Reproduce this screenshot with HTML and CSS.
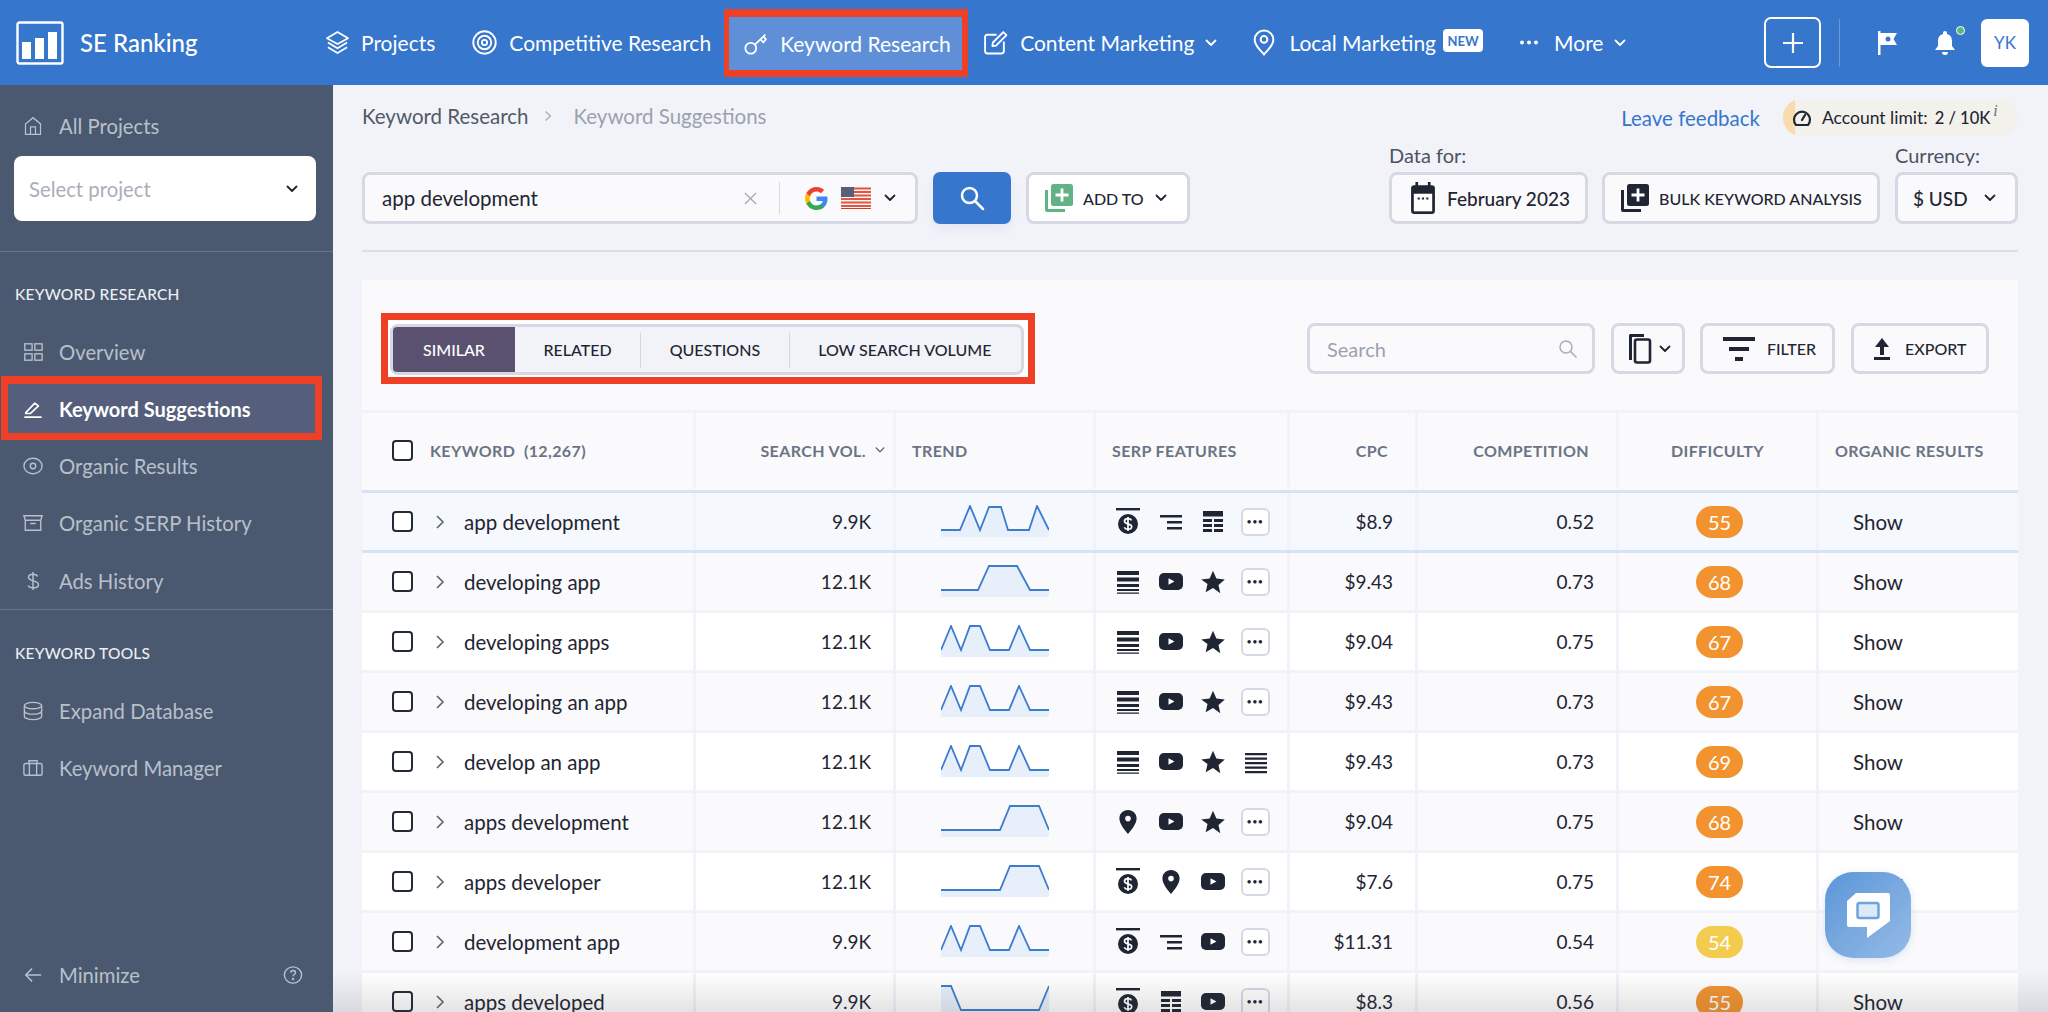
FILE: index.html
```html
<!DOCTYPE html>
<html lang="en">
<head>
<meta charset="utf-8">
<title>SE Ranking - Keyword Suggestions</title>
<link rel="stylesheet" href="styles.css">
</head>
<body>
<svg class="defs" width="0" height="0" aria-hidden="true">
  <symbol id="chev" viewBox="0 0 12 8"><path d="M1.500 1.500 6 6l4.500-4.500" fill="none" stroke="currentColor" stroke-width="1.800" stroke-linecap="round" stroke-linejoin="round"/></symbol>
  <symbol id="ad" viewBox="0 0 24 28"><rect x="0" y="0" width="24" height="2.400" fill="#1f2532"/><circle cx="12" cy="16" r="10" fill="#1f2532"/><path d="M15.600 12.400c-.7-1.100-2-1.700-3.600-1.700-2 0-3.500 1-3.500 2.600 0 3.600 7.200 1.800 7.200 5.300 0 1.700-1.600 2.700-3.700 2.700-1.700 0-3-.7-3.800-1.900M12 9v14" fill="none" stroke="#fff" stroke-width="1.700"/></symbol>
  <symbol id="rlines" viewBox="0 0 24 24"><path d="M1 5h22v2.600H1zM8 11h15v2.600H8zM8 17h15v2.600H8z" fill="#1f2532"/></symbol>
  <symbol id="tbl" viewBox="0 0 24 24"><path d="M2 1h20v5.500H2zM2 9h9v3H2zM13 9h9v3H13zM2 14h9v3H2zM13 14h9v3H13zM2 19h9v3H2zM13 19h9v3H13z" fill="#1f2532"/></symbol>
  <symbol id="stack" viewBox="0 0 24 24"><path d="M1 1h22v4H1zM1 7.500h22v4H1zM1 14h22v3H1zM1 19h22v2H1zM1 22.500h22v1.200H1z" fill="#1f2532"/></symbol>
  <symbol id="hlines" viewBox="0 0 24 24"><path d="M1 3h22v2.200H1zM1 7.500h22v2.200H1zM1 12h22v2.200H1zM1 16.500h22v2.200H1zM1 21h22v2.200H1z" fill="#1f2532"/></symbol>
  <symbol id="yt" viewBox="0 0 24 17"><rect width="24" height="17" rx="5" fill="#1f2532"/><path d="M9.500 5.200v6.600L15.500 8.500z" fill="#fff"/></symbol>
  <symbol id="star" viewBox="0 0 24 24"><path d="m12 .8 3.400 7.800 8.400.8-6.300 5.600 1.800 8.300L12 18.100l-7.300 4.200 1.800-8.300L.2 9.400l8.400-.8z" fill="#1f2532"/></symbol>
  <symbol id="pin" viewBox="0 0 18 24"><path fill-rule="evenodd" d="M9 0C4 0 .4 3.700.4 8.400.4 14 6 20 9 24c3-4 8.600-10 8.600-15.600C17.600 3.700 14 0 9 0zm0 5.800a2.800 2.800 0 1 1 0 5.600 2.800 2.800 0 0 1 0-5.600z" fill="#1f2532"/></symbol>
  <symbol id="tw" viewBox="0 0 108 33"><path d="M0 32V25L10 0 20 25 29 0h10l10 25h19L78 0 89 25h19v7z" fill="#e7f0fa"/><path d="M0 25 10 1 20 25 29 1h10l10 24h19L78 1 89 25h19" fill="none" stroke="#3c7ccf" stroke-width="1.800"/></symbol>
  <symbol id="tw1" viewBox="0 0 108 33"><path d="M0 32v-7h19L29 0l10 25L48 1h12l7 24h21L96 0l12 25v7z" fill="#e7f0fa"/><path d="M0 25h19L29 1l10 24L48 2h12l7 23h21L96 1l12 24" fill="none" stroke="#3c7ccf" stroke-width="1.800"/></symbol>
  <symbol id="tw2" viewBox="0 0 108 33"><path d="M0 32v-7h37L48 1h28l13 24h19v7z" fill="#e7f0fa"/><path d="M0 25h37L48 1h28l13 24h19" fill="none" stroke="#3c7ccf" stroke-width="1.800"/></symbol>
  <symbol id="tw3" viewBox="0 0 108 33"><path d="M0 32v-7h59L69 1h29l10 24v7z" fill="#e7f0fa"/><path d="M0 25h59L69 1h29l10 24" fill="none" stroke="#3c7ccf" stroke-width="1.800"/></symbol>
  <symbol id="tw4" viewBox="0 0 108 33"><path d="M0 33V1h10l10 24h78l10-24v32z" fill="#e7f0fa"/><path d="M0 1h10l10 24h78l10-24" fill="none" stroke="#3c7ccf" stroke-width="1.800"/></symbol>
</svg>

<header class="topbar">
  <a class="brand">
    <svg class="logo" viewBox="0 0 48 44"><rect x="1.500" y="1.500" width="45" height="41" rx="2" fill="none" stroke="#fff" stroke-width="2.400"/><path d="M6 21h9v17H6zM19 17h9v21h-9zM32 11h9v27h-9z" fill="#fff"/></svg>
    <span>SE Ranking</span>
  </a>
  <nav class="mainnav">
    <a class="navlink n-projects">
      <svg class="navicon" viewBox="0 0 26 26" fill="none" stroke="#fff" stroke-width="1.800" stroke-linejoin="round"><path d="M13 2 2 8.500l11 6 11-6z"/><path d="m3 13 10 6 10-6M3 18l10 6 10-6"/></svg>
      Projects</a>
    <a class="navlink n-comp">
      <svg class="navicon" viewBox="0 0 24 24" fill="none" stroke="#fff" stroke-width="1.800"><circle cx="12" cy="12" r="10.800"/><circle cx="12" cy="12" r="6.500"/><circle cx="12" cy="12" r="2.500"/></svg>
      Competitive Research</a>
    <a class="navlink active">
      <svg class="navicon" viewBox="0 0 24 24" fill="none" stroke="#fff" stroke-width="1.700"><circle cx="6.500" cy="16.500" r="5.200"/><path d="m10.500 13 10-9.500M16 8l2.500 3 2.500-3-2-2.500"/></svg>
      Keyword Research</a>
    <a class="navlink n-content">
      <svg class="navicon" viewBox="0 0 24 24" fill="none" stroke="#fff" stroke-width="1.800" stroke-linejoin="round"><path d="M20 11v9.500a2 2 0 0 1-2 2H4a2 2 0 0 1-2-2V6.500a2 2 0 0 1 2-2h9"/><path d="M9.500 12 19.500 2l3 3-10 10-3.500.5z"/></svg>
      Content Marketing
      <svg class="chev" viewBox="0 0 12 8"><use href="#chev"/></svg></a>
    <a class="navlink n-local">
      <svg class="navicon" viewBox="0 0 22 26" fill="none" stroke="#fff" stroke-width="1.900"><path d="M11 1.500c-5 0-9 3.800-9 8.800 0 5.700 6 10.700 9 14.200 3-3.500 9-8.500 9-14.200 0-5-4-8.800-9-8.800z"/><circle cx="11" cy="10" r="3.200"/></svg>
      Local Marketing <span class="new">NEW</span></a>
    <a class="navlink n-more">
      <svg class="dots" viewBox="0 0 18 4"><circle cx="2" cy="2" r="2" fill="#fff"/><circle cx="9" cy="2" r="2" fill="#fff"/><circle cx="16" cy="2" r="2" fill="#fff"/></svg>
      More
      <svg class="chev" viewBox="0 0 12 8"><use href="#chev"/></svg></a>
  </nav>
  <div class="topright">
    <button class="plus"><svg viewBox="0 0 24 24" width="24" height="24"><path d="M12 2v20M2 12h20" stroke="#fff" stroke-width="2.200"/></svg></button>
    <span class="vsep"></span>
    <svg class="flag" viewBox="0 0 22 24"><path fill-rule="evenodd" d="M1 0h2.500v2H20l-3.500 6 3.500 6H3.500v10H1zM11 5.500a2.500 2.500 0 1 0 0 5 2.500 2.500 0 0 0 0-5z" fill="#fff"/></svg>
    <span class="bell">
      <svg viewBox="0 0 22 24" width="22" height="24"><path d="M11 0a2 2 0 0 1 2 2v1c3.500.8 5 3.700 5 7v5l3 4H1l3-4v-5c0-3.300 1.500-6.200 5-7V2a2 2 0 0 1 2-2zM8 21h6a3 3 0 0 1-6 0z" fill="#fff"/></svg>
      <i class="dot"></i>
    </span>
    <span class="avatar">YK</span>
  </div>
</header>

<div class="shell">
  <aside class="sidebar">
    <a class="allprojects side-item">
      <svg class="sicon" viewBox="0 0 22 24" fill="none" stroke="currentColor" stroke-width="1.500"><path d="M2 9.500 11 2l9 7.500V22H2z"/><path d="M8 22v-9h6v9"/></svg>
      All Projects</a>
    <div class="selectproject">Select project <svg class="chev dark" viewBox="0 0 12 8"><use href="#chev"/></svg></div>
    <hr class="sdiv first">
    <h4 class="shead">KEYWORD RESEARCH</h4>
    <a class="side-item"><svg class="sicon" viewBox="0 0 22 22" fill="none" stroke="currentColor" stroke-width="1.500"><rect x="2" y="2" width="8" height="7"/><rect x="13" y="2" width="8" height="7"/><rect x="2" y="13" width="8" height="7"/><rect x="13" y="13" width="8" height="7"/></svg>Overview</a>
    <a class="side-item selected"><svg class="sicon" viewBox="0 0 22 22" fill="none" stroke="currentColor" stroke-width="1.800" stroke-linejoin="round"><path d="M3 15 13 4.500l4 3L8 16H3zM1.500 20h19"/></svg>Keyword Suggestions</a>
    <a class="side-item"><svg class="sicon" viewBox="0 0 22 22" fill="none" stroke="currentColor" stroke-width="1.500"><ellipse cx="11" cy="11" rx="10" ry="8.500"/><circle cx="11" cy="11" r="3"/></svg>Organic Results</a>
    <a class="side-item"><svg class="sicon" viewBox="0 0 22 22" fill="none" stroke="currentColor" stroke-width="1.500"><path d="M1 3h20l-1.500 5h-17zM2.500 8v11h17V8M8 11.500h6"/></svg>Organic SERP History</a>
    <a class="side-item"><svg class="sicon" viewBox="0 0 22 22" fill="none" stroke="currentColor" stroke-width="1.600"><path d="M16 6c-.8-1.500-2.500-2.500-5-2.500-3 0-5 1.300-5 3.500 0 5 11 2.700 11 8 0 2.200-2.200 3.500-6 3.500-2.700 0-4.500-1-5.500-2.500M11 1v20"/></svg>Ads History</a>
    <hr class="sdiv">
    <h4 class="shead">KEYWORD TOOLS</h4>
    <a class="side-item"><svg class="sicon" viewBox="0 0 22 22" fill="none" stroke="currentColor" stroke-width="1.500"><ellipse cx="11" cy="5" rx="9.500" ry="3.500"/><path d="M1.500 5v12c0 2 4.500 3.500 9.500 3.500s9.500-1.500 9.500-3.500V5M1.500 11c0 2 4.500 3.500 9.500 3.500s9.500-1.500 9.500-3.500"/></svg>Expand Database</a>
    <a class="side-item"><svg class="sicon" viewBox="0 0 22 22" fill="none" stroke="currentColor" stroke-width="1.500"><rect x="1" y="6" width="20" height="13" rx="2"/><path d="M6.500 6V3h9v3M7 6v13M15 6v13"/></svg>Keyword Manager</a>
    <div class="minimize side-item">
      <svg class="sicon" viewBox="0 0 22 22" fill="none" stroke="currentColor" stroke-width="1.600"><path d="M20 11H3M10 4l-7 7 7 7"/></svg>
      Minimize
      <svg class="help" viewBox="0 0 22 22" fill="none" stroke="currentColor" stroke-width="1.500"><ellipse cx="11" cy="11" rx="9.500" ry="9"/><path d="M8.500 8.500C8.500 7 9.500 6 11 6s2.700 1 2.700 2.400c0 2-2.700 2-2.700 4"/><circle cx="11" cy="15.500" r=".6"/></svg>
    </div>
  </aside>

  <main class="content">
    <div class="crumbrow">
      <div class="crumbs"><span>Keyword Research</span><svg class="crumbsep" viewBox="0 0 8 12"><path d="m1.500 1.500 5 4.500-5 4.500" fill="none" stroke="#a7adb8" stroke-width="1.300"/></svg><span class="muted">Keyword Suggestions</span></div>
      <a class="feedback">Leave feedback</a>
      <div class="limit">
        <svg viewBox="0 0 20 20" width="20" height="20" fill="none" stroke="#1f2532" stroke-width="2.200"><path d="M4 17a8 8 0 1 1 12 0z" stroke-linejoin="round"/><path d="m10 12 3-5" stroke-linecap="round"/></svg>
        <span>Account limit:</span> <b>2 / 10K</b><i>i</i>
      </div>
    </div>

    <div class="toolrow">
      <div class="searchbox">
        <span class="q">app development</span>
        <svg class="x" viewBox="0 0 14 14"><path d="m1 1 12 12M13 1 1 13" stroke="#a8adb6" stroke-width="1.500"/></svg>
        <span class="ssep"></span>
        <svg class="g" viewBox="0 0 24 24"><path d="M23.500 12.300c0-.9-.1-1.700-.2-2.300H12v4.500h6.500c-.3 1.500-1.100 2.700-2.400 3.500v3h3.800c2.300-2 3.600-5.100 3.600-8.700z" fill="#4285f4"/><path d="M12 24c3.200 0 6-1.100 7.900-2.900l-3.800-3c-1.100.7-2.400 1.200-4.100 1.200-3.100 0-5.800-2.100-6.700-5H1.400v3.100C3.400 21.300 7.400 24 12 24z" fill="#34a853"/><path d="M5.300 14.300c-.5-1.500-.5-3.100 0-4.600V6.600H1.400a12 12 0 0 0 0 10.800z" fill="#fbbc05"/><path d="M12 4.800c1.800 0 3.300.6 4.600 1.800L20 3.200C18 1.300 15.200 0 12 0 7.400 0 3.400 2.700 1.400 6.600l3.900 3.100c.9-2.800 3.600-4.900 6.700-4.900z" fill="#ea4335"/></svg>
        <svg class="us" viewBox="0 0 30 22"><rect width="30" height="22" fill="#f6f6f6"/><path d="M0 1.500h30M0 5h30M0 8.500h30M0 12h30M0 15.500h30M0 19h30" stroke="#e2553f" stroke-width="1.800"/><rect y="21" width="30" height="1" fill="#c9402d"/><rect width="13" height="10" fill="#5a5f78"/></svg>
        <svg class="chev dark" viewBox="0 0 12 8"><use href="#chev"/></svg>
      </div>
      <button class="gobtn"><svg viewBox="0 0 26 26" width="26" height="26" fill="none" stroke="#fff" stroke-width="2.500"><circle cx="10.500" cy="10.500" r="7.500"/><path d="m16 16 8 8" stroke-linecap="round"/></svg></button>
      <button class="btn addto">
        <svg class="btnicon" viewBox="0 0 30 30"><path d="M1 7h3v19h17v3H3a2 2 0 0 1-2-2z" fill="#62b284"/><rect x="7" y="1" width="22" height="22" rx="2.500" fill="#62b284"/><path d="M18 5.500v13M11.500 12h13" stroke="#fff" stroke-width="2.800"/></svg>
        ADD TO
        <svg class="chev dark" viewBox="0 0 12 8"><use href="#chev"/></svg>
      </button>
      <div class="labelled datafor">
        <label>Data for:</label>
        <div class="btnpair">
          <button class="btn feb">
            <svg class="calicon" viewBox="0 0 24 30" preserveAspectRatio="none"><path d="M5 0h2.500v3h9V0H19v3h1a3 3 0 0 1 3 3v21a3 3 0 0 1-3 3H4a3 3 0 0 1-3-3V6a3 3 0 0 1 3-3h1z" fill="#1f2532"/><rect x="3.500" y="11" width="17" height="16.500" fill="#fff"/><path d="M7 15.500h2M11 15.500h2M15 15.500h2" stroke="#1f2532" stroke-width="2"/></svg>
            February 2023</button>
          <button class="btn bulk">
            <svg class="btnicon" viewBox="0 0 30 30"><path d="M1 7h3v19h17v3H3a2 2 0 0 1-2-2z" fill="#1f2532"/><rect x="7" y="1" width="22" height="22" rx="2.500" fill="#1f2532"/><path d="M18 5.500v13M11.500 12h13" stroke="#fff" stroke-width="2.800"/></svg>
            BULK KEYWORD ANALYSIS</button>
        </div>
      </div>
      <div class="labelled currency">
        <label>Currency:</label>
        <button class="btn usd">$ USD <svg class="chev dark" viewBox="0 0 12 8"><use href="#chev"/></svg></button>
      </div>
    </div>
    <hr class="maindiv">

    <section class="card">
      <div class="cardtools">
        <div class="tabmark">
          <div class="tabs">
            <span class="tab on">SIMILAR</span>
            <span class="tab">RELATED</span><i class="tsep"></i>
            <span class="tab">QUESTIONS</span><i class="tsep"></i>
            <span class="tab">LOW SEARCH VOLUME</span>
          </div>
        </div>
        <div class="tablesearch">Search <svg viewBox="0 0 20 20" width="20" height="20" fill="none" stroke="#a8adb6" stroke-width="1.500"><circle cx="8" cy="8" r="6"/><path d="m12.500 12.500 6 6"/></svg></div>
        <button class="btn copy"><svg viewBox="0 0 24 30" width="24" height="30"><path d="M2 0h14v3H4v23H1V1z" fill="#1f2532"/><rect x="7" y="5.500" width="15" height="23" rx="2" fill="none" stroke="#1f2532" stroke-width="2.600"/></svg><svg class="chev dark" viewBox="0 0 12 8"><use href="#chev"/></svg></button>
        <button class="btn filter"><svg viewBox="0 0 32 24" width="32" height="24"><path d="M0 0h32v4H0zM6 10h20v4H6zM12 20h8v4h-8z" fill="#1f2532"/></svg>FILTER</button>
        <button class="btn export"><svg viewBox="0 0 16 24" width="16" height="24"><path d="M8 1l7 9h-5v8H6v-8H1zM0 20h16v3H0z" fill="#1f2532"/></svg>EXPORT</button>
      </div>

      <div class="grid">
        <div class="row head">
          <div class="c kw"><span class="cb"></span><span class="th">KEYWORD &nbsp;(12,267)</span></div>
          <div class="c r"><span class="th">SEARCH VOL.</span><svg class="chev sort" viewBox="0 0 12 8"><use href="#chev"/></svg></div>
          <div class="c tr-h"><span class="th">TREND</span></div>
          <div class="c sf-h"><span class="th">SERP FEATURES</span></div>
          <div class="c r cpc-h"><span class="th">CPC</span></div>
          <div class="c r"><span class="th">COMPETITION</span></div>
          <div class="c ctr"><span class="th">DIFFICULTY</span></div>
          <div class="c or-h"><span class="th">ORGANIC RESULTS</span></div>
        </div>

        <div class="row hot">
          <div class="c kw"><span class="cb"></span><svg class="exp" viewBox="0 0 10 16"><path d="m2 2 6 6-6 6" fill="none" stroke="#5c6470" stroke-width="1.600"/></svg>app development</div>
          <div class="c r">9.9K</div>
          <div class="c t"><svg class="spark"><use href="#tw1"/></svg></div>
          <div class="c s"><svg class="f ad"><use href="#ad"/></svg><svg class="f"><use href="#rlines"/></svg><svg class="f"><use href="#tbl"/></svg><span class="more">•••</span></div>
          <div class="c r">$8.9</div><div class="c r">0.52</div>
          <div class="c ctr score"><span class="badge">55</span></div><div class="c show">Show</div>
        </div>

        <div class="row alt">
          <div class="c kw"><span class="cb"></span><svg class="exp" viewBox="0 0 10 16"><path d="m2 2 6 6-6 6" fill="none" stroke="#5c6470" stroke-width="1.600"/></svg>developing app</div>
          <div class="c r">12.1K</div>
          <div class="c t"><svg class="spark"><use href="#tw2"/></svg></div>
          <div class="c s"><svg class="f"><use href="#stack"/></svg><svg class="f yt"><use href="#yt"/></svg><svg class="f"><use href="#star"/></svg><span class="more">•••</span></div>
          <div class="c r">$9.43</div><div class="c r">0.73</div>
          <div class="c ctr score"><span class="badge">68</span></div><div class="c show">Show</div>
        </div>

        <div class="row">
          <div class="c kw"><span class="cb"></span><svg class="exp" viewBox="0 0 10 16"><path d="m2 2 6 6-6 6" fill="none" stroke="#5c6470" stroke-width="1.600"/></svg>developing apps</div>
          <div class="c r">12.1K</div>
          <div class="c t"><svg class="spark"><use href="#tw"/></svg></div>
          <div class="c s"><svg class="f"><use href="#stack"/></svg><svg class="f yt"><use href="#yt"/></svg><svg class="f"><use href="#star"/></svg><span class="more">•••</span></div>
          <div class="c r">$9.04</div><div class="c r">0.75</div>
          <div class="c ctr score"><span class="badge">67</span></div><div class="c show">Show</div>
        </div>

        <div class="row alt">
          <div class="c kw"><span class="cb"></span><svg class="exp" viewBox="0 0 10 16"><path d="m2 2 6 6-6 6" fill="none" stroke="#5c6470" stroke-width="1.600"/></svg>developing an app</div>
          <div class="c r">12.1K</div>
          <div class="c t"><svg class="spark"><use href="#tw"/></svg></div>
          <div class="c s"><svg class="f"><use href="#stack"/></svg><svg class="f yt"><use href="#yt"/></svg><svg class="f"><use href="#star"/></svg><span class="more">•••</span></div>
          <div class="c r">$9.43</div><div class="c r">0.73</div>
          <div class="c ctr score"><span class="badge">67</span></div><div class="c show">Show</div>
        </div>

        <div class="row">
          <div class="c kw"><span class="cb"></span><svg class="exp" viewBox="0 0 10 16"><path d="m2 2 6 6-6 6" fill="none" stroke="#5c6470" stroke-width="1.600"/></svg>develop an app</div>
          <div class="c r">12.1K</div>
          <div class="c t"><svg class="spark"><use href="#tw"/></svg></div>
          <div class="c s"><svg class="f"><use href="#stack"/></svg><svg class="f yt"><use href="#yt"/></svg><svg class="f"><use href="#star"/></svg><svg class="f"><use href="#hlines"/></svg></div>
          <div class="c r">$9.43</div><div class="c r">0.73</div>
          <div class="c ctr score"><span class="badge">69</span></div><div class="c show">Show</div>
        </div>

        <div class="row alt">
          <div class="c kw"><span class="cb"></span><svg class="exp" viewBox="0 0 10 16"><path d="m2 2 6 6-6 6" fill="none" stroke="#5c6470" stroke-width="1.600"/></svg>apps development</div>
          <div class="c r">12.1K</div>
          <div class="c t"><svg class="spark"><use href="#tw3"/></svg></div>
          <div class="c s"><svg class="f pin"><use href="#pin"/></svg><svg class="f yt"><use href="#yt"/></svg><svg class="f"><use href="#star"/></svg><span class="more">•••</span></div>
          <div class="c r">$9.04</div><div class="c r">0.75</div>
          <div class="c ctr score"><span class="badge">68</span></div><div class="c show">Show</div>
        </div>

        <div class="row">
          <div class="c kw"><span class="cb"></span><svg class="exp" viewBox="0 0 10 16"><path d="m2 2 6 6-6 6" fill="none" stroke="#5c6470" stroke-width="1.600"/></svg>apps developer</div>
          <div class="c r">12.1K</div>
          <div class="c t"><svg class="spark"><use href="#tw3"/></svg></div>
          <div class="c s"><svg class="f ad"><use href="#ad"/></svg><svg class="f pin"><use href="#pin"/></svg><svg class="f yt"><use href="#yt"/></svg><span class="more">•••</span></div>
          <div class="c r">$7.6</div><div class="c r">0.75</div>
          <div class="c ctr score"><span class="badge">74</span></div><div class="c show">Show</div>
        </div>

        <div class="row alt">
          <div class="c kw"><span class="cb"></span><svg class="exp" viewBox="0 0 10 16"><path d="m2 2 6 6-6 6" fill="none" stroke="#5c6470" stroke-width="1.600"/></svg>development app</div>
          <div class="c r">9.9K</div>
          <div class="c t"><svg class="spark"><use href="#tw"/></svg></div>
          <div class="c s"><svg class="f ad"><use href="#ad"/></svg><svg class="f"><use href="#rlines"/></svg><svg class="f yt"><use href="#yt"/></svg><span class="more">•••</span></div>
          <div class="c r">$11.31</div><div class="c r">0.54</div>
          <div class="c ctr score"><span class="badge yellow">54</span></div><div class="c show">Show</div>
        </div>

        <div class="row">
          <div class="c kw"><span class="cb"></span><svg class="exp" viewBox="0 0 10 16"><path d="m2 2 6 6-6 6" fill="none" stroke="#5c6470" stroke-width="1.600"/></svg>apps developed</div>
          <div class="c r">9.9K</div>
          <div class="c t"><svg class="spark"><use href="#tw4"/></svg></div>
          <div class="c s"><svg class="f ad"><use href="#ad"/></svg><svg class="f"><use href="#tbl"/></svg><svg class="f yt"><use href="#yt"/></svg><span class="more">•••</span></div>
          <div class="c r">$8.3</div><div class="c r">0.56</div>
          <div class="c ctr score"><span class="badge">55</span></div><div class="c show">Show</div>
        </div>
      </div>
    </section>
  </main>
</div>

<button class="chat" aria-label="Chat">
  <svg viewBox="0 0 44 46" width="44" height="46"><path d="M10 1h32a2 2 0 0 1 2 2v26L21 46v-11H3a2 2 0 0 1-2-2V9z" fill="#fff"/><rect x="11.500" y="11" width="21" height="15" rx="2" fill="#dde9f7" stroke="#6ea3de" stroke-width="2.500"/></svg>
</button>
<div class="bottomfade"></div>
</body>
</html>
```

FILE: styles.css
```css
* { box-sizing: border-box; }
html, body { margin: 0; height: 1012px; overflow: hidden; }
body { font-family: "Lato", "Noto Sans", sans-serif; color: #1f2532; background: #f2f3f9; font-size: 19px; position: relative; }
.defs { position: absolute; }
button { font: inherit; color: inherit; }
hr { margin: 0; border: 0; }

/* top bar */
.topbar { height: 85px; background: #3676cc; color: #fff; display: flex; align-items: center; font-size: 21px; }
.brand { display: flex; align-items: center; gap: 16px; margin-left: 16px; width: 309px; flex: none; font-size: 24px; font-weight: 500; }
.logo { width: 48px; height: 44px; }
.mainnav { display: flex; align-items: center; height: 85px; }
.navlink { display: flex; align-items: center; white-space: nowrap; }
.navicon { width: 25px; height: 25px; margin-right: 11px; flex: none; }
.n-projects { margin-right: 37px; }
.n-comp { margin-right: 13px; }
.n-comp .navicon { margin-right: 12px; }
.active { height: 68px; width: 244px; background: #5f90d7; border: solid #ee4027; border-width: 8px 6px 7px 5px; padding-left: 15px; margin-right: 15px; }
.n-content { margin-right: 35px; }
.n-content .navicon { margin-right: 12px; }
.chev { width: 12px; height: 8px; margin-left: 11px; flex: none; color: #fff; }
.chev.dark { color: #1f2532; }
.n-local { margin-right: 37px; }
.n-local .navicon { width: 24px; height: 27px; margin-right: 13px; }
.new { background: #fff; color: #3676cc; font-size: 13px; font-weight: 700; height: 23px; width: 40px; display: flex; align-items: center; justify-content: center; border-radius: 4px; margin: -4px 0 0 7px; }
.dots { width: 18px; height: 5px; margin-right: 16px; }
.topright { margin-left: auto; margin-right: 19px; display: flex; align-items: center; }
.plus { width: 57px; height: 51px; background: transparent; border: 2.500px solid #fff; border-radius: 7px; display: flex; align-items: center; justify-content: center; padding: 0; }
.vsep { width: 1px; height: 48px; background: #6c9ad9; margin: 0 37px 0 18px; }
.flag { width: 22px; height: 24px; margin-right: 35px; }
.bell { position: relative; display: flex; margin-right: 25px; }
.dot { position: absolute; right: -9px; top: -5px; width: 9px; height: 9px; border-radius: 50%; background: #58b87f; border: 1px solid #fff; }
.avatar { width: 48px; height: 48px; background: #fff; border-radius: 6px; color: #3676cc; font-size: 17px; display: flex; align-items: center; justify-content: center; }

/* shell */
.shell { display: flex; height: 927px; }
.sidebar { width: 333px; flex: none; background: #4a5970; color: #b9c0cb; display: flex; flex-direction: column; font-size: 20.300px; position: relative; }
.side-item { display: flex; align-items: center; height: 57.300px; padding-left: 23px; white-space: nowrap; flex: none; }
.sicon { width: 20px; height: 20px; margin-right: 16px; flex: none; }
.allprojects { height: 40px; margin-top: 21px; }
.selectproject { margin: 10px 17px 0 14px; height: 65px; background: #fff; border-radius: 8px; color: #a9afb9; display: flex; align-items: center; justify-content: space-between; padding: 0 18px 0 15px; }
.sdiv { height: 1px; background: #68758a; flex: none; }
.sdiv.first { margin-top: 30px; }
.shead { margin: 0; font-size: 15.500px; font-weight: 500; color: #eceef2; letter-spacing: .2px; padding-left: 15px; height: 20px; line-height: 20px; flex: none; }
.sdiv.first + .shead { margin-top: 32px; margin-bottom: 19px; }
.sdiv + .shead { margin-top: 33px; margin-bottom: 19px; }
.selected { height: 64px; margin: -4px 11px -3px 1px; background: #555f7c; border: solid #ee4027; border-width: 8px 7px 7px 7px; padding-left: 15px; color: #fff; font-weight: 700; font-size: 20px; }
.minimize { margin-top: auto; margin-bottom: 9px; height: 57px; }
.help { width: 20px; height: 20px; margin-left: auto; margin-right: 30px; }

/* content */
.content { flex: 1; padding: 0 30px 0 29px; min-width: 0; }
.crumbrow { display: flex; align-items: center; height: 37px; margin-top: 14px; }
.crumbs { display: flex; align-items: center; font-size: 20.500px; color: #505a68; margin-top: -3px; }
.crumbs .muted { color: #9aa2ae; }
.crumbsep { width: 8px; height: 12px; margin: 0 21px 0 16px; }
.feedback { margin-left: auto; color: #3676cc; margin-right: 23px; font-size: 20.500px; }
.limit { width: 235px; height: 37px; border-radius: 18px; background: linear-gradient(90deg, #f8dcae 12px, #f3f1ec 12px); display: flex; align-items: center; gap: 6px; padding-left: 9px; font-size: 17.500px; white-space: nowrap; }
.limit svg { margin-right: 4px; }
.limit b { font-weight: 500; font-size: 16.500px; margin-left: 1px; }
.limit i { font-family: "Liberation Serif", serif; color: #6b7280; font-size: 16px; margin: -14px 0 0 -3px; }

.toolrow { display: flex; align-items: flex-end; margin-top: 36px; height: 52px; }
.searchbox { width: 556px; height: 52px; border: 3px solid #d6d9e4; border-radius: 8px; background: #fafafc; display: flex; align-items: center; padding-left: 17px; font-size: 20.500px; }
.q { flex: 1; }
.x { width: 13px; height: 13px; margin-right: 22px; }
.ssep { width: 1px; height: 32px; background: #d6d9e4; margin-right: 25px; }
.g { width: 23px; height: 23px; margin-right: 13px; }
.us { width: 30px; height: 22px; }
.searchbox .chev { margin: 0 19px 0 13px; }
.gobtn { width: 78px; height: 52px; border: 0; border-radius: 7px; background: #3676cc; margin-left: 15px; display: flex; align-items: center; justify-content: center; box-shadow: 0 6px 10px rgba(54,118,204,.07); padding: 0; }
.btn { border: 3px solid #d6d9e4; border-radius: 8px; background: #fafafc; height: 52px; display: flex; align-items: center; padding: 0; white-space: nowrap; font-size: 16px; font-weight: 500; }
.addto { width: 164px; margin-left: 15px; background: #fff; padding-left: 15px; }
.btnicon { width: 30px; height: 30px; margin-right: 9px; }
.labelled { display: flex; flex-direction: column; }
.labelled label { height: 34px; line-height: 34px; color: #4a5362; font-size: 20px; }
.datafor { margin-left: auto; margin-top: -34px; }
.btnpair { display: flex; gap: 14px; }
.feb { width: 199px; padding-left: 18px; font-size: 19px; }
.calicon { width: 26px; height: 32px; margin-right: 11px; }
.bulk { width: 278px; padding-left: 15px; font-size: 16px; }
.currency { margin-left: 15px; margin-top: -34px; }
.usd { width: 123px; padding-left: 15px; font-size: 19px; justify-content: flex-start; }
.usd .chev { margin-left: 16px; }
.maindiv { height: 2px; background: #dcdee7; margin-top: 26px; }

/* card */
.card { margin-top: 28px; background: #fafafc; }
.cardtools { height: 133px; display: flex; align-items: center; padding: 0 29px 0 19px; }
.tabmark { flex: none; width: 654px; height: 71px; margin-top: 4px; padding: 4px 4px 2px 2px; border: 7px solid #ee4027; background: #fff; }
.tabs { display: flex; align-items: center; height: 51px; border: 3px solid #d6d9e4; border-radius: 8px; background: #f2f3f9; font-size: 16px; font-weight: 500; color: #1f2532; }
.tab { display: flex; align-items: center; justify-content: center; height: 45px; padding: 0 28.500px; white-space: nowrap; flex: none; }
.tab.on { width: 122px; background: #59516f; color: #fff; border-radius: 4px 0 0 4px; padding: 0; }
.tsep { width: 1px; height: 36px; background: #d6d9e4; flex: none; }
.cardtools > .tablesearch { margin-left: auto; }
.tablesearch, .cardtools .btn { margin-top: 4px; height: 51px; }
.tablesearch { width: 288px; border: 3px solid #d6d9e4; border-radius: 8px; background: #fafafc; color: #9aa2ae; display: flex; align-items: center; justify-content: space-between; padding: 0 14px 0 17px; font-size: 20px; }
.copy { width: 74px; margin-left: 16px; padding-left: 14px; }
.copy .chev { margin-left: 7px; }
.filter { width: 135px; margin-left: 15px; padding-left: 20px; gap: 12px; }
.export { width: 138px; margin-left: 16px; padding-left: 20px; gap: 15px; }

.grid { display: flex; flex-direction: column; border-top: 3px solid #f2f3f9; margin-top: -3px; }
.row { display: grid; grid-template-columns: 334px 200px 200px 194px 128px 201px 200px 199px; height: 60px; background: #fff; border-bottom: 3px solid #f2f3f9; }
.row.alt { background: #fafafc; }
.row.head { height: 74px; background: #fafafc; border-bottom: 0; }
.row.hot { background: #f5f8fd; border-top: 3px solid #d6e3f6; border-bottom: 3px solid #d6e3f6; height: 63px; margin-top: 3px; }
.c { display: flex; align-items: center; white-space: nowrap; border-right: 3px solid #f2f3f9; min-width: 0; }
.c:last-child { border-right: 0; }
.c.r { justify-content: flex-end; padding-right: 22px; }
.row.head .c.r { padding-right: 27px; }
.c.ctr { justify-content: center; }
.c.score { padding-left: 4px; }
.kw { padding-left: 30px; font-size: 20.500px; }
.cb { width: 21px; height: 21px; border: 2.500px solid #222a38; border-radius: 4px; background: #fff; margin-right: 22px; flex: none; }
.head .cb { margin-right: 17px; }
.exp { width: 10px; height: 16px; margin-right: 19px; flex: none; }
.th { font-size: 16px; font-weight: 700; color: #6a7484; letter-spacing: .4px; }
.sort { color: #6a7484; margin-left: 9px; width: 10px; margin-right: -19px; }
.tr-h { padding-left: 16px; }
.sf-h { padding-left: 16px; }
.or-h { padding-left: 16px; }
.t { padding-left: 45px; }
.spark { width: 108px; height: 33px; }
.s { padding-left: 20px; gap: 18.500px; }
.f { width: 24px; height: 24px; flex: none; }
.f.ad { height: 28px; }
.f.yt { height: 17px; }
.f.pin { height: 24px; }
.more { width: 29px; height: 28px; border: 2.500px solid #d6d9e4; border-radius: 6px; display: flex; align-items: center; justify-content: center; font-size: 9px; letter-spacing: .5px; margin-left: -3px; background: #fff; }
.badge { width: 47px; height: 32px; border-radius: 16px; background: #f2932f; color: #fff; display: flex; align-items: center; justify-content: center; font-size: 20px; }
.badge.yellow { background: #f3cb4e; }
.show { padding-left: 34px; font-size: 20.500px; }

/* floating */
.chat { position: absolute; left: 1825px; top: 872px; width: 86px; height: 86px; border: 0; padding: 0; border-radius: 28px; background: linear-gradient(135deg, #5b96d8, #96bbe6); display: flex; align-items: center; justify-content: center; box-shadow: 0 2px 8px rgba(90,140,210,.2); }
.bottomfade { position: absolute; left: 333px; right: 0; bottom: 0; height: 40px; background: linear-gradient(rgba(60,60,70,0), rgba(60,60,70,.14)); pointer-events: none; }
```
